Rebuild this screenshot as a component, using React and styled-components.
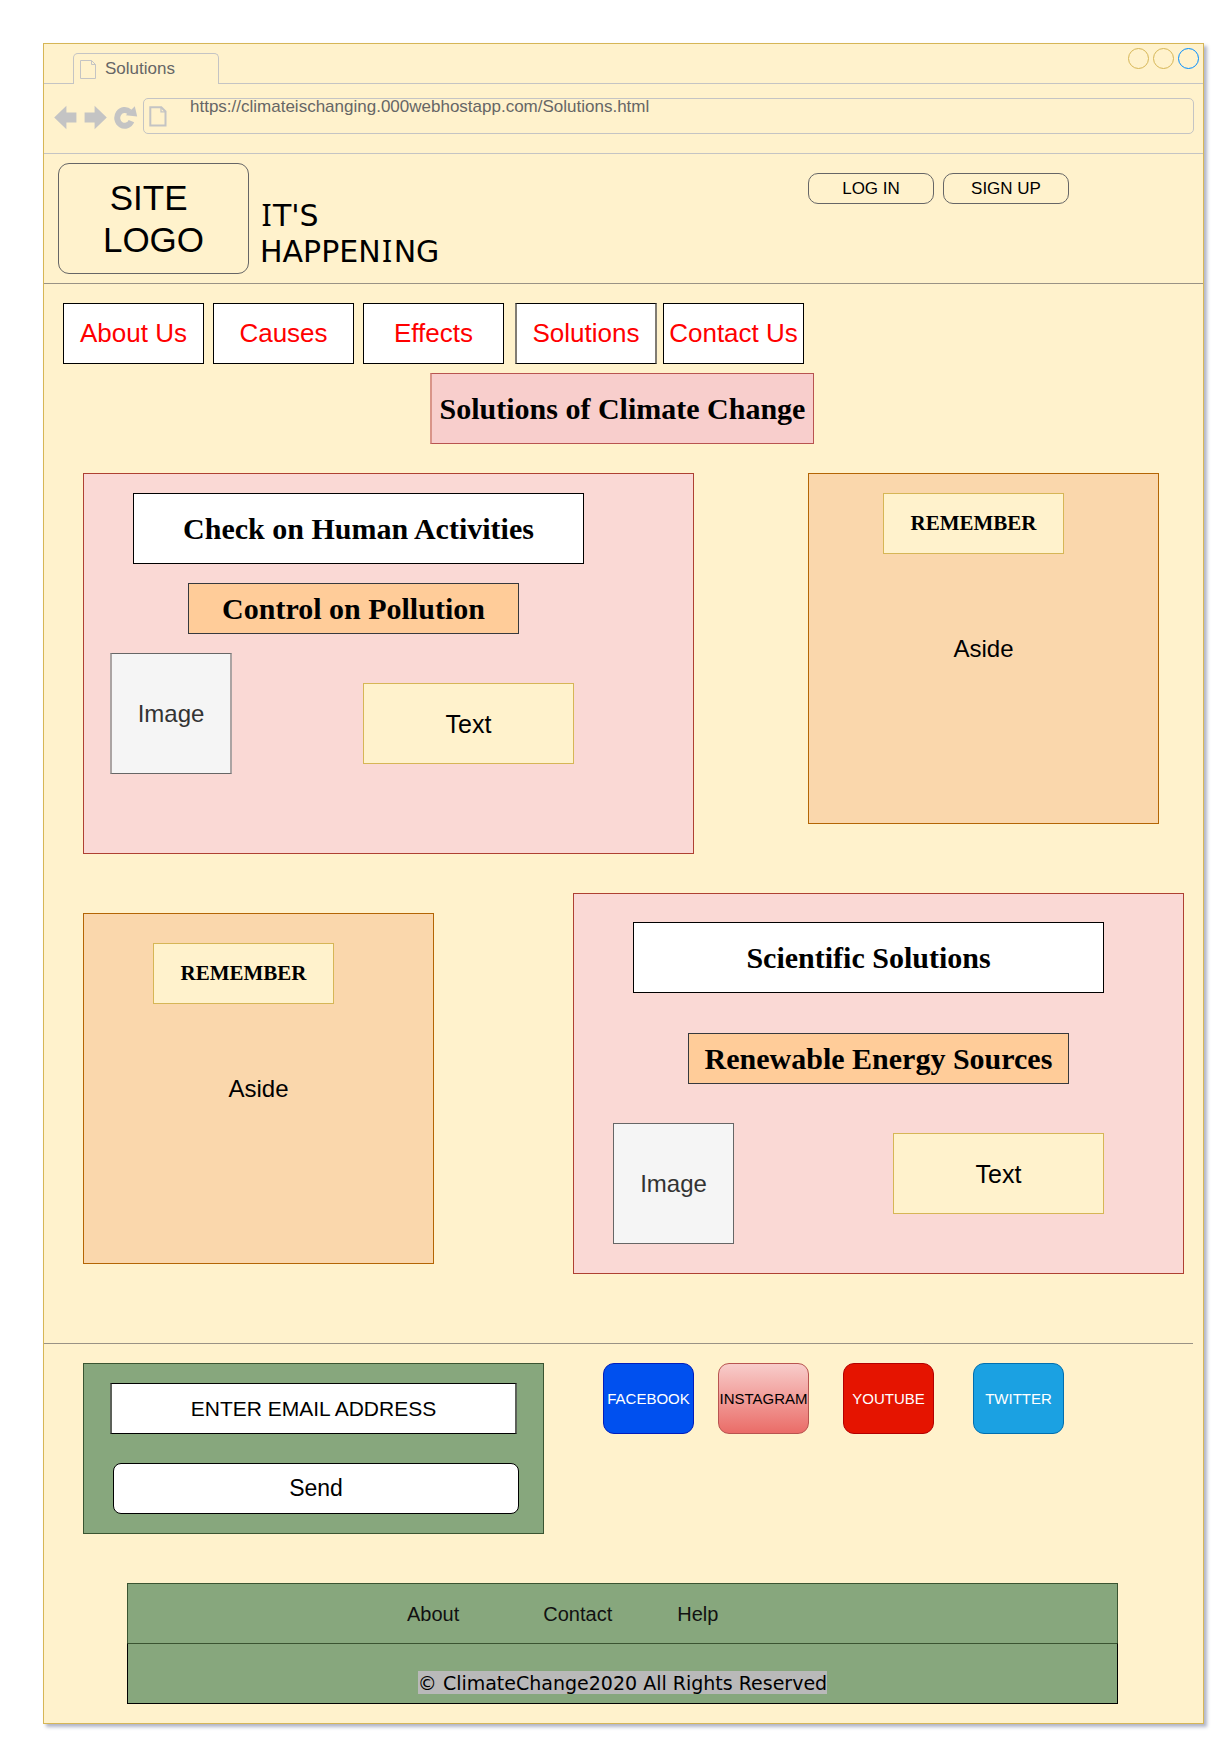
import React from "react";
import styled, { createGlobalStyle } from "styled-components";

const sans = `"Liberation Sans", Arial, sans-serif`;
const serif = `"Liberation Serif", "Times New Roman", serif`;

const GlobalStyle = createGlobalStyle`
  *, *::before, *::after { box-sizing: border-box; }
  body { margin: 0; background: #fff; font-family: ${sans}; color: #000; }
  h1, h2, h3, h4, p { margin: 0; }
`;

const BrowserWindow = styled.div`
  display: flex;
  flex-direction: column;
  width: 1161px;
  height: 1681px;
  margin: 43px 0 0 43px;
  border: 1px solid #d6b656;
  background: #fff2cc;
  box-shadow: 3px 3px 3.4px rgba(61, 69, 116, 0.4);
`;

const Page = styled.div`
  height: 1752px;
  overflow: hidden;
`;

/* Browser chrome */
const TabStrip = styled.div`
  display: flex;
  height: 40px;
`;

const StripLead = styled.div`
  width: 29px;
  border-bottom: 1px solid #c4c4c4;
`;

const Tab = styled.div`
  display: flex;
  align-items: flex-start;
  align-self: flex-end;
  width: 146px;
  height: 31px;
  padding: 6px 0 0 6px;
  border: 1px solid #c4c4c4;
  border-bottom: 0;
  border-radius: 5px 5px 0 0;
`;

const TabTitle = styled.span`
  margin: -1px 0 0 8px;
  font-size: 17px;
  line-height: 19px;
  color: #666;
`;

const StripRest = styled.div`
  display: flex;
  flex: 1;
  justify-content: flex-end;
  gap: 4px;
  padding: 4px 4px 0 0;
  border-bottom: 1px solid #c4c4c4;
`;

const WindowDot = styled.span`
  width: 21px;
  height: 21px;
  border: 1px solid ${(p) => p.$color};
  border-radius: 50%;
`;

const Toolbar = styled.div`
  display: flex;
  align-items: flex-start;
  height: 70px;
  padding: 14px 0 0 9px;
  border-bottom: 1px solid #c4c4c4;
`;

const ToolIcons = styled.div`
  display: flex;
  gap: 6px;
  margin-top: 7px;
  width: 90px;
`;

const AddressBar = styled.div`
  display: flex;
  align-items: flex-start;
  width: 1051px;
  height: 36px;
  padding-left: 5px;
  border: 1px solid #c4c4c4;
  border-radius: 5px;

  svg { margin-top: 7px; }
`;

const Url = styled.span`
  margin-left: 23px;
  font-size: 17px;
  line-height: 16px;
  color: #666;
`;

/* Site header */
const SiteHeader = styled.header`
  display: flex;
  align-items: flex-start;
  height: 130px;
  padding: 9px 134px 0 14px;
  border-bottom: 1px solid #999285;
`;

const Logo = styled.div`
  display: flex;
  align-items: center;
  justify-content: center;
  width: 191px;
  height: 111px;
  border: 1px solid #666;
  border-radius: 11px;
  font-size: 35px;
  line-height: 42px;
  text-align: center;
`;

const Tagline = styled.p`
  margin: 35px 0 0 11px;
  font-family: "DejaVu Sans", sans-serif;
  font-size: 30px;
  line-height: 36px;
`;

const SerifI = styled.span`
  padding: 0 1.4px;
  font-family: "Noto Sans", sans-serif;
  line-height: 1;
`;

const AuthButtons = styled.div`
  display: flex;
  gap: 9px;
  margin: 10px 0 0 auto;
`;

const AuthButton = styled.button`
  width: 126px;
  height: 31px;
  padding: 0;
  border: 1px solid #666;
  border-radius: 10px;
  background: transparent;
  font: 17px/20px ${sans};
  color: #000;
`;

const Nav = styled.nav`
  display: flex;
  gap: 9px;
  padding: 19px 0 0 19px;
`;

const NavItem = styled.a`
  display: flex;
  align-items: center;
  justify-content: center;
  width: ${(p) => (p.$active ? 142 : 141)}px;
  height: 61px;
  margin-left: ${(p) => p.$shift || 0}px;
  border: 1px solid #000;
  border-width: ${(p) => (p.$active ? "1px 2px" : "1px")};
  border-left-color: ${(p) => (p.$active ? "#807c73" : "#000")};
  border-right-color: ${(p) => (p.$active ? "#807c73" : "#000")};
  background: #fff;
  font-size: 26px;
  line-height: 31px;
  white-space: nowrap;
  color: #f00;
`;

const PageTitle = styled.h1`
  display: flex;
  align-items: center;
  justify-content: center;
  width: 384px;
  height: 71px;
  margin: 9px 0 0 386px;
  border: 1px solid #b85450;
  border-left: 2px solid #d99488;
  background: #f8cecc;
  font: bold 30px/36px ${serif};
  white-space: nowrap;
`;

/* Content */
const ContentRow = styled.section`
  display: flex;
  align-items: flex-start;
  gap: ${(p) => p.$gap}px;
  margin: ${(p) => p.$top}px 0 0 39px;
`;

const Topic = styled.article`
  width: 611px;
  height: 381px;
  border: 1px solid #ae4132;
  background: #fad9d5;
`;

const TopicTitle = styled.h2`
  display: flex;
  align-items: center;
  justify-content: center;
  width: ${(p) => p.$width}px;
  height: 71px;
  margin: ${(p) => p.$margin};
  border: 1px solid #000;
  background: #fff;
  font: bold 30px/36px ${serif};
`;

const TopicSubtitle = styled.h3`
  display: flex;
  align-items: center;
  justify-content: center;
  width: ${(p) => p.$width}px;
  height: 51px;
  margin: ${(p) => p.$margin};
  border: 1px solid #36393d;
  background: #ffcc99;
  font: bold 30px/36px ${serif};
`;

const MediaRow = styled.div`
  display: flex;
  align-items: flex-start;
  gap: ${(p) => p.$gap}px;
  margin: ${(p) => p.$margin};
`;

const ImageBox = styled.div`
  display: flex;
  align-items: center;
  justify-content: center;
  width: ${(p) => (p.$soft ? 122 : 121)}px;
  height: 121px;
  border: 1px solid #666;
  border-width: ${(p) => (p.$soft ? "1px 2px" : "1px")};
  border-left-color: ${(p) => (p.$soft ? "#aba4a3" : "#666")};
  border-right-color: ${(p) => (p.$soft ? "#aba4a3" : "#666")};
  background: #f5f5f5;
  font-size: 24px;
  line-height: 29px;
  color: #333;
`;

const TextBox = styled.div`
  display: flex;
  align-items: center;
  justify-content: center;
  width: 211px;
  height: 81px;
  margin-top: ${(p) => p.$drop}px;
  border: 1px solid #d6b656;
  background: #fff2cc;
  font-size: 25px;
  line-height: 30px;
`;

const AsideBox = styled.aside`
  width: 351px;
  height: 351px;
  margin-top: ${(p) => p.$drop || 0}px;
  border: 1px solid #b46504;
  background: #fad7ac;
`;

const Reminder = styled.h4`
  display: flex;
  align-items: center;
  justify-content: center;
  width: 181px;
  height: 61px;
  margin: ${(p) => p.$margin};
  border: 1px solid #d6b656;
  background: #fff2cc;
  font: bold 21px/25px ${serif};
`;

const AsideText = styled.p`
  margin-top: ${(p) => p.$top}px;
  font-size: 24px;
  line-height: 29px;
  text-align: center;
`;

const Divider = styled.hr`
  width: 1149px;
  height: 1px;
  margin: 69px 0 0;
  border: 0;
  background: #999285;
`;

/* Subscribe and social */
const ContactRow = styled.section`
  display: flex;
  align-items: flex-start;
  margin: 19px 0 0 39px;
`;

const SubscribeForm = styled.form`
  width: 461px;
  height: 171px;
  padding: 19px 0 0 26px;
  border: 1px solid #3a5431;
  background: #87a77d;
`;

const EmailField = styled.div`
  display: flex;
  align-items: center;
  justify-content: center;
  width: 407px;
  height: 51px;
  border: solid #000;
  border-width: 1px 2px;
  border-left-color: #5c6159;
  border-right-color: #5c6159;
  background: #fff;
  font-size: 21px;
  line-height: 25px;
`;

const SendButton = styled.button`
  display: block;
  width: 406px;
  height: 51px;
  margin: 29px 0 0 3px;
  padding: 0 0 2px;
  border: 1px solid #000;
  border-radius: 8px;
  background: #fff;
  font: 23px/28px ${sans};
  color: #000;
`;

const SocialLink = styled.a`
  display: flex;
  align-items: center;
  justify-content: center;
  width: 91px;
  height: 71px;
  margin-left: ${(p) => p.$left}px;
  border: 1px solid ${(p) => p.$stroke};
  border-radius: 11px;
  background: ${(p) => p.$fill};
  background-origin: border-box;
  font-size: 15px;
  line-height: 18px;
  color: ${(p) => p.$color || "#fff"};
`;

/* Footer */
const Footer = styled.footer`
  width: 991px;
  margin: 49px 0 0 83px;
  background: #87a77d;
`;

const FooterLinks = styled.div`
  display: flex;
  align-items: center;
  height: 60px;
  padding-left: 279px;
  border: 1px solid #3a5431;
  border-bottom: 0;
  font-size: 20px;
  line-height: 24px;
`;

const FooterLink = styled.a`
  margin-right: ${(p) => p.$gap || 0}px;
  color: #111;
`;

const Legal = styled.div`
  display: flex;
  justify-content: center;
  align-items: flex-start;
  height: 61px;
  padding-top: 27px;
  border: 1px solid #000;
  border-top-color: #3a5431;
`;

const Copyright = styled.span`
  height: 23px;
  background: #b9b9b9;
  font: 19px/25px "DejaVu Sans", sans-serif;
  white-space: nowrap;
`;

const TabFileIcon = () => (
  <svg width="17" height="20" viewBox="0 0 17 20" fill="none" stroke="#c4c4c4">
    <path d="M0.5 0.5H11.5L15.5 4.5V18.5H0.5Z" />
    <path d="M11.5 0.5V4.5H15.5" />
  </svg>
);

const UrlFileIcon = () => (
  <svg width="18" height="21" viewBox="0 0 18 21" fill="none" stroke="#c4c4c4" strokeWidth="2">
    <path d="M1.3 1.3H12.3L16.5 5.5V19.5H1.3Z" />
    <path d="M12 1.5V5.8H16.5" strokeWidth="1.3" />
  </svg>
);

const BackIcon = () => (
  <svg width="24" height="26" viewBox="0 0 24 26" fill="#c4c4c4">
    <path d="M1.2 12.6L13.4 0.7V7.6H23.4V17.4H13.4V24.3Z" />
  </svg>
);

const ForwardIcon = () => (
  <svg width="25" height="26" viewBox="0 0 25 26" fill="#c4c4c4">
    <path d="M23.8 12.6L11.6 0.7V7.6H1.6V17.4H11.6V24.3Z" />
  </svg>
);

const ReloadIcon = () => (
  <svg width="24" height="26" viewBox="0 0 24 26">
    <path d="M17.4 16.1A7.4 7.9 0 1 1 15.6 7" fill="none" stroke="#c4c4c4" strokeWidth="6" />
    <path d="M20.8 1.2L23.2 11.6L11.8 10.2Z" fill="#c4c4c4" />
  </svg>
);

const navItems = [
  { label: "About Us" },
  { label: "Causes" },
  { label: "Effects" },
  { label: "Solutions", active: true, shift: 2 },
  { label: "Contact Us", shift: -3 },
];

const socials = [
  { label: "FACEBOOK", fill: "#0050ef", stroke: "#001dbc", left: 59 },
  {
    label: "INSTAGRAM",
    fill: "linear-gradient(#f8cecc, #ea6b66)",
    stroke: "#b85450",
    color: "#000",
    left: 24,
  },
  { label: "YOUTUBE", fill: "#e51400", stroke: "#b20000", left: 34 },
  { label: "TWITTER", fill: "#1ba1e2", stroke: "#006eaf", left: 39 },
];

export default function App() {
  return (
    <Page>
      <GlobalStyle />
      <BrowserWindow>
        <TabStrip>
          <StripLead />
          <Tab>
            <TabFileIcon />
            <TabTitle>Solutions</TabTitle>
          </Tab>
          <StripRest>
            <WindowDot $color="#d6b656" />
            <WindowDot $color="#d6b656" />
            <WindowDot $color="#008cff" />
          </StripRest>
        </TabStrip>
        <Toolbar>
          <ToolIcons>
            <BackIcon />
            <ForwardIcon />
            <ReloadIcon />
          </ToolIcons>
          <AddressBar>
            <UrlFileIcon />
            <Url>https://climateischanging.000webhostapp.com/Solutions.html</Url>
          </AddressBar>
        </Toolbar>

        <SiteHeader>
          <Logo>
            SITE&nbsp;
            <br />
            LOGO
          </Logo>
          <Tagline>
            <SerifI>I</SerifI>T'S
            <br />
            HAPPEN<SerifI>I</SerifI>NG
          </Tagline>
          <AuthButtons>
            <AuthButton>LOG IN</AuthButton>
            <AuthButton>SIGN UP</AuthButton>
          </AuthButtons>
        </SiteHeader>

        <Nav>
          {navItems.map((item) => (
            <NavItem key={item.label} $active={item.active} $shift={item.shift}>
              {item.label}
            </NavItem>
          ))}
        </Nav>
        <PageTitle>Solutions of Climate Change</PageTitle>

        <ContentRow $gap={114} $top={29}>
          <Topic>
            <TopicTitle $width={451} $margin="19px 0 0 49px">
              Check on Human Activities
            </TopicTitle>
            <TopicSubtitle $width={331} $margin="19px 0 0 104px">
              Control on Pollution
            </TopicSubtitle>
            <MediaRow $gap={131} $margin="19px 0 0 26px">
              <ImageBox $soft>Image</ImageBox>
              <TextBox $drop={30}>Text</TextBox>
            </MediaRow>
          </Topic>
          <AsideBox>
            <Reminder $margin="19px 0 0 74px">REMEMBER</Reminder>
            <AsideText $top={80}>Aside</AsideText>
          </AsideBox>
        </ContentRow>

        <ContentRow $gap={139} $top={39}>
          <AsideBox $drop={20}>
            <Reminder $margin="29px 0 0 69px">REMEMBER</Reminder>
            <AsideText $top={70}>Aside</AsideText>
          </AsideBox>
          <Topic>
            <TopicTitle $width={471} $margin="28px 0 0 59px">
              Scientific Solutions
            </TopicTitle>
            <TopicSubtitle $width={381} $margin="40px 0 0 114px">
              Renewable Energy Sources
            </TopicSubtitle>
            <MediaRow $gap={159} $margin="39px 0 0 39px">
              <ImageBox>Image</ImageBox>
              <TextBox $drop={10}>Text</TextBox>
            </MediaRow>
          </Topic>
        </ContentRow>

        <Divider />

        <ContactRow>
          <SubscribeForm>
            <EmailField>ENTER EMAIL ADDRESS</EmailField>
            <SendButton type="button">Send</SendButton>
          </SubscribeForm>
          {socials.map((s) => (
            <SocialLink key={s.label} $fill={s.fill} $stroke={s.stroke} $color={s.color} $left={s.left}>
              {s.label}
            </SocialLink>
          ))}
        </ContactRow>

        <Footer>
          <FooterLinks>
            <FooterLink $gap={84}>About</FooterLink>
            <FooterLink $gap={65}>Contact</FooterLink>
            <FooterLink>Help</FooterLink>
          </FooterLinks>
          <Legal>
            <Copyright>© ClimateChange2020 All Rights Reserved</Copyright>
          </Legal>
        </Footer>
      </BrowserWindow>
    </Page>
  );
}
